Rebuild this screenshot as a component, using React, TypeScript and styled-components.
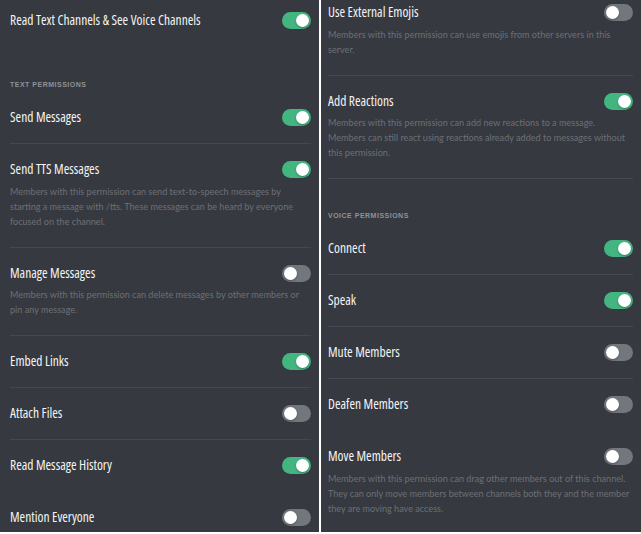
import React from "react";
import styled, { createGlobalStyle } from "styled-components";

const GlobalStyle = createGlobalStyle`
  body {
    margin: 0;
    background: #ffffff;
    font-family: "Open Sans", "Liberation Sans", Arial, sans-serif;
  }
`;

const Page = styled.div`
  display: flex;
  gap: 2px;
  width: 641px;
  height: 534px;
  background: #ffffff;
`;

const Panel = styled.div<{ $padLeft: number; $width: number }>`
  box-sizing: border-box;
  width: ${(p) => p.$width}px;
  height: 532px;
  padding: 0 8px 0 ${(p) => p.$padLeft}px;
  background: #36393f;
  overflow: hidden;
  display: flex;
  flex-direction: column;
`;

type Divider = "line" | "clear" | "none";

const Row = styled.div<{ $top: number; $bottom: number; $divider: Divider }>`
  display: flex;
  justify-content: space-between;
  align-items: flex-start;
  flex-shrink: 0;
  padding: ${(p) => p.$top}px 0 ${(p) => p.$bottom}px;
  border-bottom: ${(p) =>
    p.$divider === "none"
      ? "none"
      : `1px solid ${p.$divider === "line" ? "#45484e" : "transparent"}`};
`;

const Info = styled.div`
  flex: 1;
  min-width: 0;
`;

const Title = styled.div`
  font-family: "Open Sans", "Liberation Sans", Arial, sans-serif;
  font-stretch: condensed;
  font-size: 13.5px;
  font-weight: 500;
  line-height: 16px;
  color: #f3f4f5;
  white-space: nowrap;
`;

const Desc = styled.div`
  margin-top: 6.5px;
  font-family: Lato, "Liberation Sans", Arial, sans-serif;
  font-size: 9.1px;
  line-height: 15px;
  color: #6c7077;
  white-space: nowrap;
`;

const SectionHeader = styled.div`
  flex-shrink: 0;
  padding: 32px 0 2px;
  font-family: "Liberation Sans", Arial, sans-serif;
  font-size: 7px;
  font-weight: 700;
  line-height: 10px;
  letter-spacing: 0.5px;
  text-transform: uppercase;
  color: #8e9297;
`;

const Toggle = styled.div<{ $on: boolean }>`
  position: relative;
  flex-shrink: 0;
  width: 29px;
  height: 17px;
  margin: 0 0 -1px 8px;
  border-radius: 9px;
  background: ${(p) => (p.$on ? "#43b581" : "#72767d")};

  &::after {
    content: "";
    position: absolute;
    top: 2px;
    left: ${(p) => (p.$on ? "14px" : "2px")};
    width: 13px;
    height: 13px;
    border-radius: 50%;
    background: #ffffff;
    box-shadow: 0 1px 2px rgba(0, 0, 0, 0.3);
  }
`;

type Perm = {
  kind: "perm";
  title: string;
  desc?: string[];
  on: boolean;
  divider: Divider;
  top?: number;
  bottom?: number;
};

type Header = { kind: "header"; label: string };

type Item = Perm | Header;

const left: Item[] = [
  {
    kind: "perm",
    title: "Read Text Channels & See Voice Channels",
    on: true,
    divider: "none",
    top: 12,
    bottom: 20,
  },
  { kind: "header", label: "Text Permissions" },
  { kind: "perm", title: "Send Messages", on: true, divider: "line" },
  {
    kind: "perm",
    title: "Send TTS Messages",
    on: true,
    divider: "line",
    desc: [
      "Members with this permission can send text-to-speech messages by",
      "starting a message with /tts. These messages can be heard by everyone",
      "focused on the channel.",
    ],
  },
  {
    kind: "perm",
    title: "Manage Messages",
    on: false,
    divider: "line",
    desc: [
      "Members with this permission can delete messages by other members or",
      "pin any message.",
    ],
  },
  { kind: "perm", title: "Embed Links", on: true, divider: "line" },
  { kind: "perm", title: "Attach Files", on: false, divider: "line" },
  { kind: "perm", title: "Read Message History", on: true, divider: "clear" },
  { kind: "perm", title: "Mention Everyone", on: false, divider: "line" },
];

const right: Item[] = [
  {
    kind: "perm",
    title: "Use External Emojis",
    on: false,
    divider: "line",
    top: 4,
    desc: [
      "Members with this permission can use emojis from other servers in this",
      "server.",
    ],
  },
  {
    kind: "perm",
    title: "Add Reactions",
    on: true,
    divider: "line",
    desc: [
      "Members with this permission can add new reactions to a message.",
      "Members can still react using reactions already added to messages without",
      "this permission.",
    ],
  },
  { kind: "header", label: "Voice Permissions" },
  { kind: "perm", title: "Connect", on: true, divider: "line" },
  { kind: "perm", title: "Speak", on: true, divider: "line" },
  { kind: "perm", title: "Mute Members", on: false, divider: "line" },
  { kind: "perm", title: "Deafen Members", on: false, divider: "clear" },
  {
    kind: "perm",
    title: "Move Members",
    on: false,
    divider: "line",
    desc: [
      "Members with this permission can drag other members out of this channel.",
      "They can only move members between channels both they and the member",
      "they are moving have access.",
    ],
  },
];

const PermissionList = ({ items }: { items: Item[] }) => (
  <>
    {items.map((item, i) =>
      item.kind === "header" ? (
        <SectionHeader key={i}>{item.label}</SectionHeader>
      ) : (
        <Row
          key={i}
          $top={item.top ?? 17}
          $bottom={item.bottom ?? 18}
          $divider={item.divider}
        >
          <Info>
            <Title>{item.title}</Title>
            {item.desc && (
              <Desc>
                {item.desc.map((line, j) => (
                  <div key={j}>{line}</div>
                ))}
              </Desc>
            )}
          </Info>
          <Toggle $on={item.on} />
        </Row>
      )
    )}
  </>
);

export default function App() {
  return (
    <>
      <GlobalStyle />
      <Page>
        <Panel $width={319} $padLeft={10}>
          <PermissionList items={left} />
        </Panel>
        <Panel $width={320} $padLeft={7}>
          <PermissionList items={right} />
        </Panel>
      </Page>
    </>
  );
}
